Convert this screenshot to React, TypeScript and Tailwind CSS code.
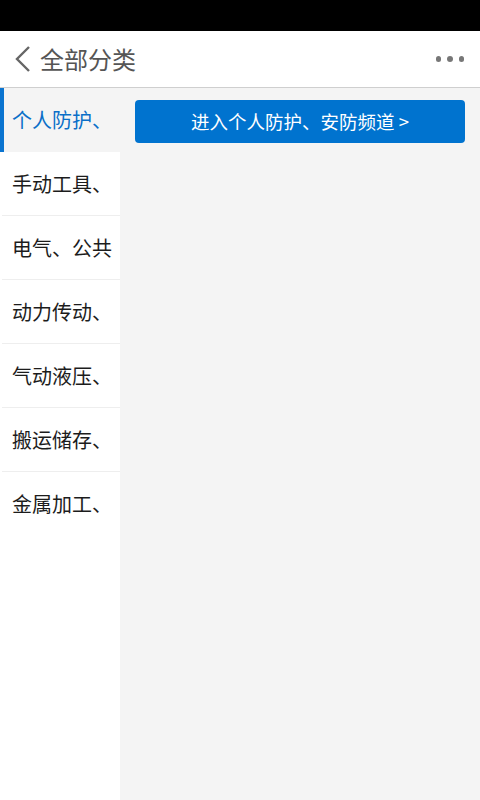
const CATEGORIES = [
  "个人防护、",
  "手动工具、",
  "电气、公共",
  "动力传动、",
  "气动液压、",
  "搬运储存、",
  "金属加工、",
];

export default function App() {
  const active = 0;

  return (
    <div
      className="w-[480px] h-[800px] flex flex-col bg-white overflow-hidden"
      style={{ fontFamily: '"Noto Sans CJK SC", "Noto Sans", sans-serif' }}
    >
      {/* Status bar */}
      <div className="h-[31px] bg-black shrink-0" />

      {/* Header */}
      <header className="h-[57px] shrink-0 flex items-center bg-white border-b-[1.5px] border-[#cfcfcf]">
        <button className="pl-[14px] pr-[8px] h-full flex items-center">
          <svg width="18" height="28" viewBox="0 0 18 28" fill="none">
            <path d="M15 2 L3 14 L15 26" stroke="#666" strokeWidth="2.4" />
          </svg>
        </button>
        <h1 className="text-[24px] text-[#555] leading-none -mt-[1px]">全部分类</h1>
        <div className="ml-auto pr-[16px] flex items-center gap-[6px]">
          <span className="w-[5.5px] h-[5.5px] rounded-full bg-[#777]" />
          <span className="w-[5.5px] h-[5.5px] rounded-full bg-[#777]" />
          <span className="w-[5.5px] h-[5.5px] rounded-full bg-[#777]" />
        </div>
      </header>

      <div className="flex flex-1 min-h-0">
        {/* Sidebar */}
        <nav className="w-[120px] shrink-0 bg-white flex flex-col">
          {CATEGORIES.map((name, i) => {
            const last = i === CATEGORIES.length - 1;
            if (i === active) {
              return (
                <div
                  key={name}
                  className="h-[64px] flex items-center bg-[#f4f4f4] border-l-[4px] border-[#0a74d0] pl-[8px] whitespace-nowrap text-[20px] text-[#0a6fc8]"
                >
                  {name}
                </div>
              );
            }
            return (
              <div
                key={name}
                className={`h-[64px] flex items-center ml-[2px] pl-[10px] whitespace-nowrap text-[20px] text-[#1c1c1c] ${
                  last ? "" : "border-b border-[#eeeeee]"
                }`}
              >
                {name}
              </div>
            );
          })}
        </nav>

        {/* Content */}
        <main className="flex-1 bg-[#f4f4f4] px-[15px] pt-[12px]">
          <button className="w-full h-[43px] rounded-[4px] bg-[#0073cf] text-white text-[18.5px] flex items-center justify-center">
            进入个人防护、安防频道 &gt;
          </button>
        </main>
      </div>
    </div>
  );
}
